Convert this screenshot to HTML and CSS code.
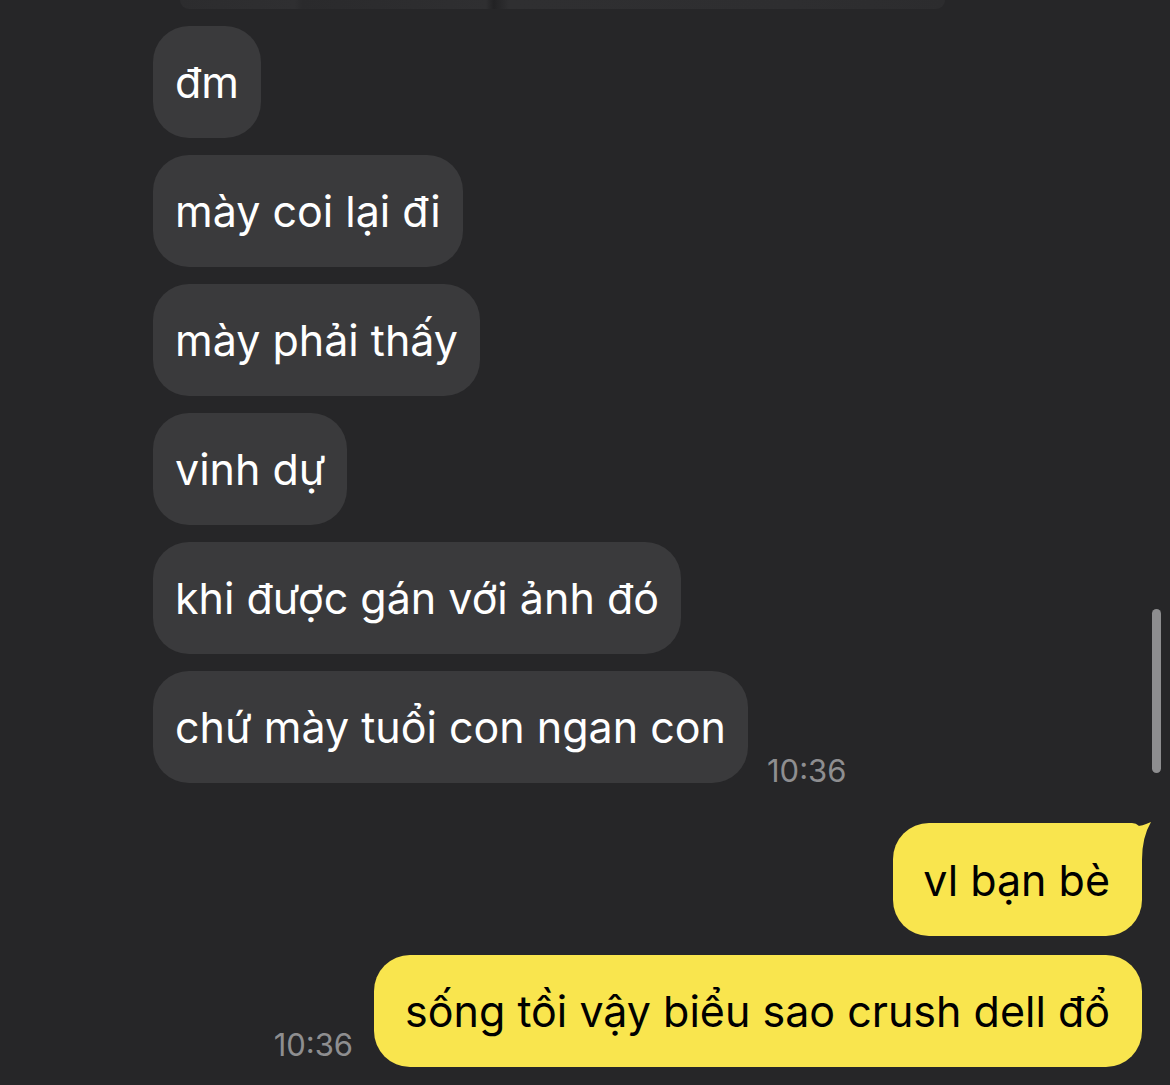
FILE: index.html
```html
<!DOCTYPE html>
<html lang="vi">
<head>
<meta charset="utf-8">
<link rel="stylesheet" href="styles.css">
</head>
<body>
<div class="screen">
  <div class="chat">
    <div class="media-tail"></div>
    <div class="row"><div class="bubble in">đm</div></div>
    <div class="row"><div class="bubble in">mày coi lại đi</div></div>
    <div class="row"><div class="bubble in">mày phải thấy</div></div>
    <div class="row"><div class="bubble in">vinh dự</div></div>
    <div class="row"><div class="bubble in">khi được gán với ảnh đó</div></div>
    <div class="row"><div class="bubble in">chứ mày tuổi con ngan con</div><span class="time time-in">10:36</span></div>
    <div class="row out first-out">
      <div class="bubble me tailed">vl bạn bè
        <svg class="tail" width="52" height="40" viewBox="0 0 52 40"><path d="M0 0 H22 Q36 7 52 -1 Q43 14 43 37 H0 Z" fill="#f9e54e"/></svg>
      </div>
    </div>
    <div class="row out"><span class="time time-out">10:36</span><div class="bubble me">sống tồi vậy biểu sao crush dell đổ</div></div>
  </div>
  <div class="scrollbar"></div>
</div>
</body>
</html>
```

FILE: styles.css
```css
html, body {
  margin: 0;
  padding: 0;
  background: #262628;
}
.screen {
  position: relative;
  width: 1170px;
  height: 1085px;
  overflow: hidden;
  background: #262628;
  font-family: Inter, "Noto Sans", "Liberation Sans", sans-serif;
}
.chat {
  display: flex;
  flex-direction: column;
  gap: 17px;
  padding: 0 28px 0 153px;
}
.media-tail {
  width: 765px;
  height: 9px;
  margin-left: 27px;
  border-radius: 0 0 30px 30px;
  background: linear-gradient(90deg, #2c2c2e 0%, #2f2f31 15%, #2a2a2c 16%, #2f2f31 40%, #222224 41%, #2f2f31 43%, #2e2e30 80%, #2c2c2e 100%);
}
.row {
  display: flex;
  align-items: flex-end;
}
.row.out {
  justify-content: flex-end;
}
.first-out {
  margin-top: 23px;
}
.row.out + .row.out {
  margin-top: 2px;
}
.bubble {
  position: relative;
  height: 112px;
  box-sizing: border-box;
  padding: 0 22px;
  display: flex;
  align-items: center;
  border-radius: 36px;
  font-size: 43px;
  letter-spacing: 0;
  white-space: nowrap;
}
.bubble.in {
  background: #3a3a3c;
  color: #ffffff;
}
.bubble.me {
  background: #f9e54e;
  color: #000000;
  padding: 0 32px 0 31px;
}
.bubble.tailed {
  height: 113px;
  padding-left: 30px;
  border-top-right-radius: 10px;
}
.tail {
  position: absolute;
  top: 0;
  right: -9px;
  overflow: visible;
}
.time {
  font-size: 31px;
  color: #8e8e90;
  line-height: 1;
}
.time-in {
  margin-left: 19px;
  margin-bottom: -3px;
}
.time-out {
  margin-right: 21px;
  margin-bottom: 7px;
}
.scrollbar {
  position: absolute;
  left: 1152px;
  top: 609px;
  width: 9px;
  height: 164px;
  border-radius: 5px;
  background: #8d8d8f;
}
```
